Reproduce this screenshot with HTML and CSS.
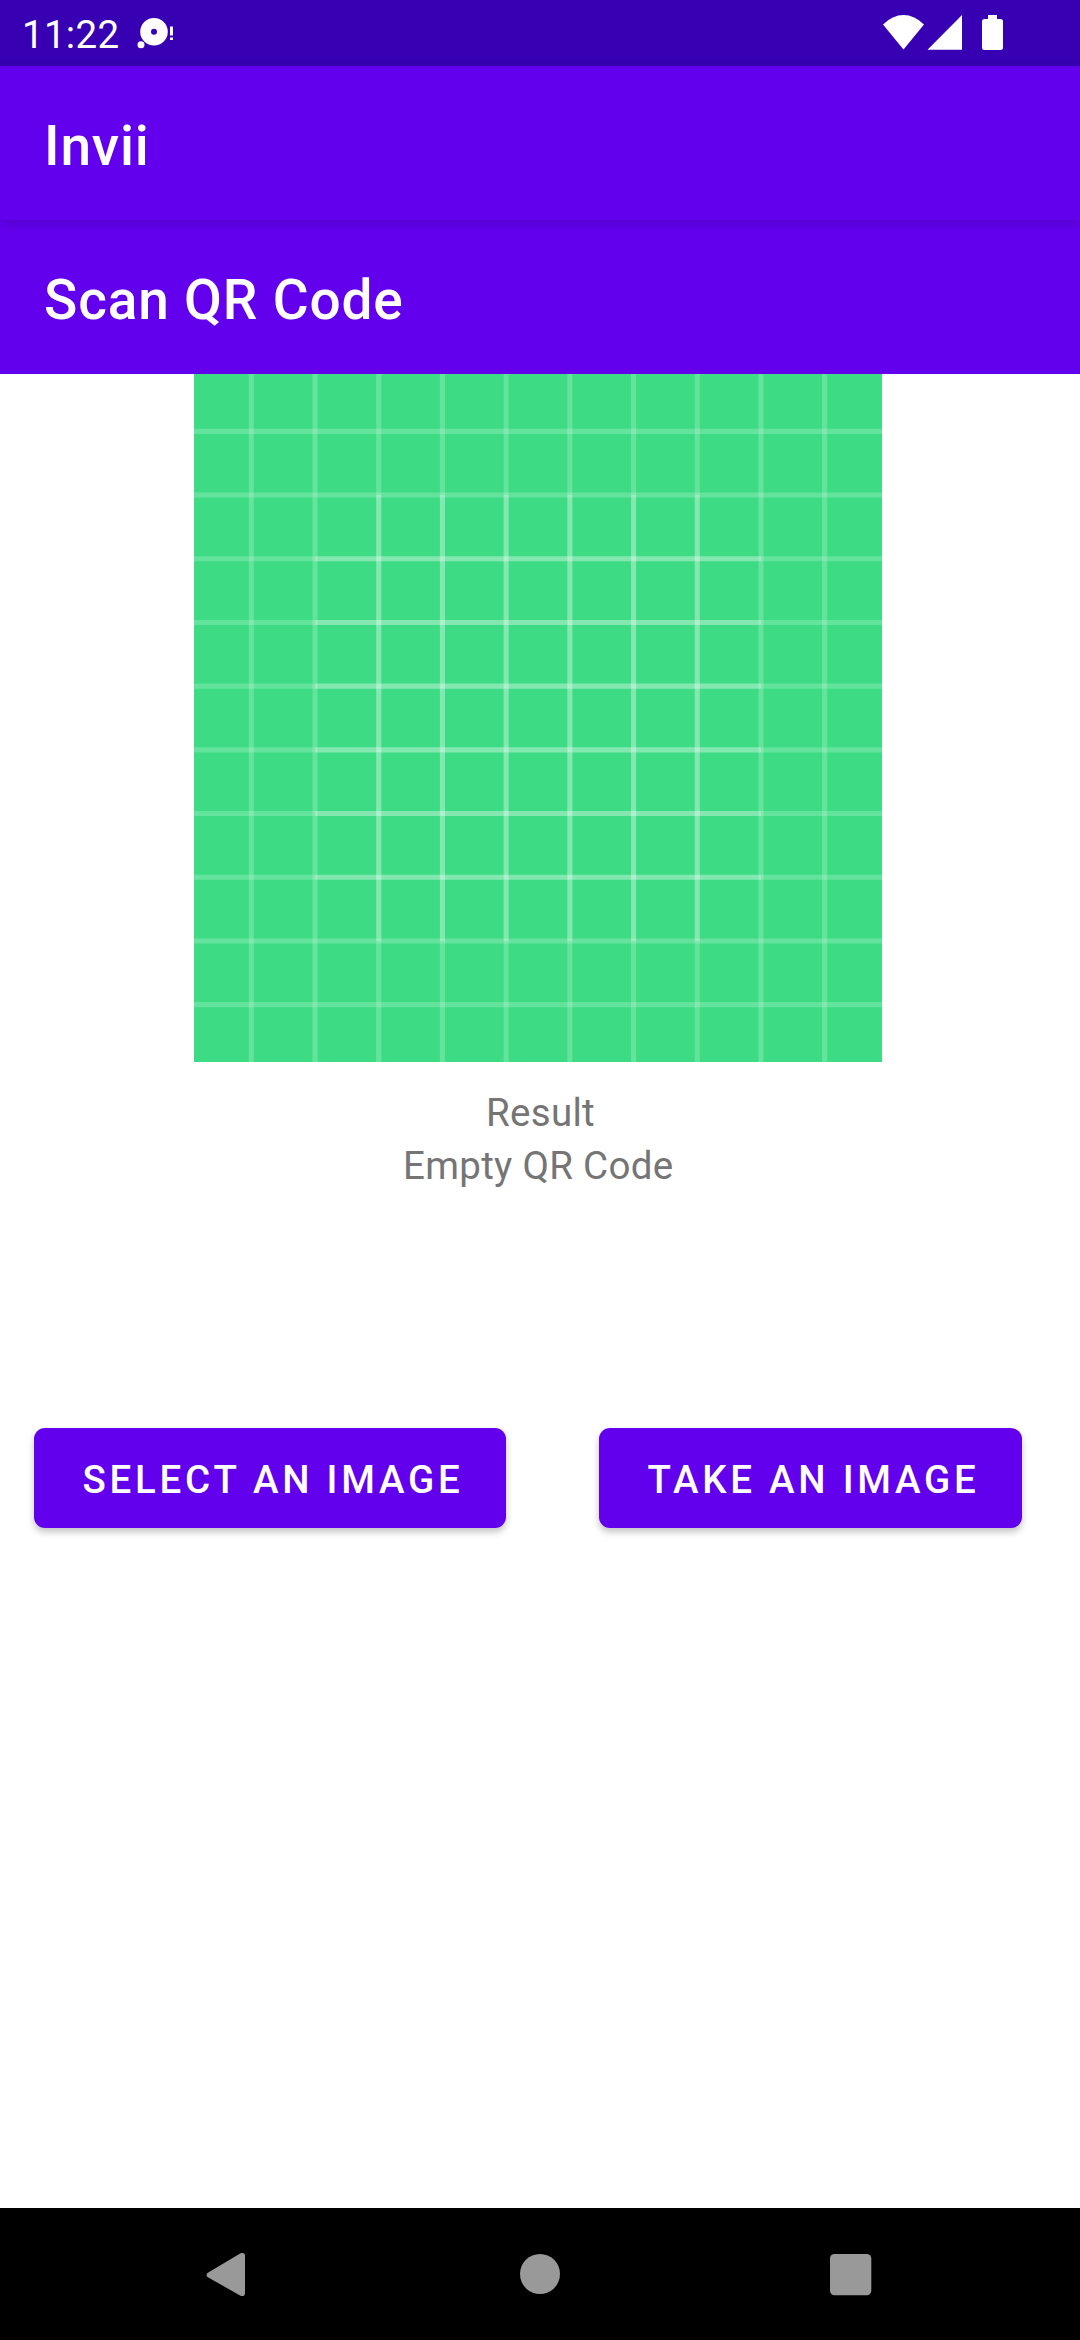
FILE: index.html
```html
<!DOCTYPE html>
<html lang="en">
<head>
<meta charset="utf-8">
<title>Invii</title>
<link rel="stylesheet" href="styles.css">
</head>
<body>
<div class="screen">
  <header class="status-bar">
    <span class="clock">11:22</span>
    <svg class="notice" width="38" height="34" viewBox="0 0 38 34">
      <path fill-rule="evenodd" d="M17 2a13.8 13.8 0 1 0 0 27.6a13.8 13.8 0 1 0 0-27.600M17 12.800a3 3 0 1 1 0 6a3 3 0 1 1 0-6"/>
      <circle cx="4" cy="28.800" r="3.500"/>
      <path d="M33 10.500h3v9h-3zM33 21.500h3v2.500h-3z"/>
    </svg>
    <svg class="signals" width="130" height="40" viewBox="0 0 130 40">
      <path d="M3 12.500Q12.500 3 23.500 3T44 12.500L23.500 37.500z"/>
      <path d="M47.500 37.800L82 3V37.800z"/>
      <path d="M108 3h9v4h3.500q2.500 0 2.500 2.500v26q0 2.500-2.500 2.500h-16q-2.500 0-2.500-2.500v-26q0-2.500 2.500-2.500h3.500z"/>
    </svg>
  </header>
  <div class="app-bar app-bar-raised"><h1 class="title">Invii</h1></div>
  <div class="app-bar"><h2 class="title">Scan QR Code</h2></div>
  <main class="content">
    <svg class="preview" width="688" height="688" viewBox="0 0 108 108">
      <path class="backdrop" d="M0 0h108v108H0z"/>
      <g class="grid">
        <path d="M9 0V108"/><path d="M19 0V108"/><path d="M29 0V108"/><path d="M39 0V108"/><path d="M49 0V108"/>
        <path d="M59 0V108"/><path d="M69 0V108"/><path d="M79 0V108"/><path d="M89 0V108"/><path d="M99 0V108"/>
        <path d="M0 9H108"/><path d="M0 19H108"/><path d="M0 29H108"/><path d="M0 39H108"/><path d="M0 49H108"/>
        <path d="M0 59H108"/><path d="M0 69H108"/><path d="M0 79H108"/><path d="M0 89H108"/><path d="M0 99H108"/>
        <path d="M19 29H89"/><path d="M19 39H89"/><path d="M19 49H89"/><path d="M19 59H89"/><path d="M19 69H89"/><path d="M19 79H89"/>
        <path d="M29 19V89"/><path d="M39 19V89"/><path d="M49 19V89"/><path d="M59 19V89"/><path d="M69 19V89"/><path d="M79 19V89"/>
      </g>
    </svg>
    <p class="label result">Result</p>
    <p class="label message">Empty QR Code</p>
    <div class="actions">
      <button class="button select">SELECT AN IMAGE</button>
      <button class="button take">TAKE AN IMAGE</button>
    </div>
  </main>
  <nav class="nav-bar">
    <svg class="back" width="40" height="46" viewBox="0 0 40 46"><path d="M1.500 21L34.500 1.200Q39 0 39 4V41Q39 45 34.500 43.800L1.500 25Q-.5 23 1.500 21z"/></svg>
    <svg class="home" width="40" height="40" viewBox="0 0 40 40"><circle cx="20" cy="20" r="20"/></svg>
    <svg class="recents" width="42" height="42" viewBox="0 0 42 42"><rect width="41.300" height="41.300" rx="4.500"/></svg>
  </nav>
</div>
</body>
</html>
```
FILE: styles.css
```css
* { box-sizing: border-box; }
body, h1, h2, p { margin: 0; }
body { font-family: Roboto, sans-serif; background: #fff; }
svg { display: block; flex: none; }

.screen { display: flex; flex-direction: column; width: 1080px; height: 2340px; overflow: hidden; }

.status-bar { display: flex; align-items: flex-start; height: 66px; padding-left: 22px; background: #3700b3; color: #fff; }
.status-bar svg { fill: #fff; }
.clock { width: 99px; padding-top: 12px; font-size: 38.5px; line-height: 45px; letter-spacing: .3px; }
.notice { margin: 16px 0 0 16px; }
.signals { margin: 12px 0 0 705px; }

.app-bar { display: flex; align-items: center; height: 154px; padding: 5px 0 0 44px; background: #6200ee; color: #fff; }
.app-bar-raised { position: relative; z-index: 1; box-shadow: 0 3px 10px rgba(0, 0, 0, .16); }
.title { font-size: 55px; line-height: 64px; font-weight: 500; letter-spacing: .83px; }

.content { flex: 1; display: flex; flex-direction: column; }
.preview { margin-left: 194px; }
.backdrop { fill: #3ddc84; }
.grid { fill: none; stroke: #fff; stroke-opacity: .2; stroke-width: .8; }
.label { color: #757575; font-size: 38.5px; line-height: 53px; letter-spacing: .3px; }
.result { margin: 24px 0 0 486px; }
.message { margin-left: 403px; }

.actions { display: flex; gap: 93px; margin: 236px 0 0 34px; }
.button { height: 100px; padding: 2px 0 0 6px; border: 0; border-radius: 11px; background: #6200ee; color: #fff; font: 500 38.5px/45px Roboto, sans-serif; letter-spacing: 3.73px; white-space: nowrap; box-shadow: 0 4px 7px rgba(0, 0, 0, .24); }
.select { width: 472px; }
.take { width: 423px; }

.nav-bar { display: flex; align-items: center; height: 132px; padding-left: 206px; background: #000; }
.nav-bar svg { fill: #999; }
.back { margin-top: 2px; }
.home { margin-left: 274px; }
.recents { margin: 2px 0 0 270px; }
```
